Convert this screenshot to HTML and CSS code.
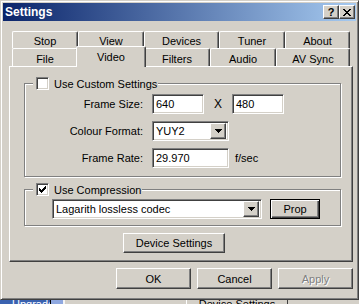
FILE: index.html
```html
<!DOCTYPE html>
<html lang="en">
<head>
  <meta charset="UTF-8">
  <meta name="viewport" content="width=device-width, initial-scale=1.0">
  <title>Settings</title>
  <link rel="stylesheet" href="styles.css">
</head>
<body>
  <div class="window">
    <div class="titlebar">
      <span class="title">Settings</span>
      <div class="title-buttons">
        <span class="tbtn help">?</span>
        <span class="tbtn close">
          <svg width="8" height="7" viewBox="0 0 8 7" shape-rendering="crispEdges"><path d="M0 0h2v1h-2zM6 0h2v1h-2zM1 1h2v1h-2zM5 1h2v1h-2zM2 2h4v1h-4zM3 3h2v1h-2zM2 4h4v1h-4zM1 5h2v1h-2zM5 5h2v1h-2zM0 6h2v1h-2zM6 6h2v1h-2z"/></svg>
        </span>
      </div>
    </div>

    <div class="content">
      <div class="tabs">
        <div class="tab-row back">
          <div class="tab w66">Stop</div>
          <div class="tab w66">View</div>
          <div class="tab w75">Devices</div>
          <div class="tab w66">Tuner</div>
          <div class="tab w65">About</div>
        </div>
        <div class="tab-row front">
          <div class="tab w66">File</div>
          <div class="tab w66 active">Video</div>
          <div class="tab w66">Filters</div>
          <div class="tab w66">Audio</div>
          <div class="tab w74">AV Sync</div>
        </div>
      </div>

      <div class="panel">
        <fieldset class="group custom">
          <legend><span class="check"></span><span class="legend-text">Use Custom Settings</span></legend>
          <div class="form">
            <label>Frame Size:</label>
            <div class="ctl">
              <span class="edit w52">640</span>
              <span class="times">X</span>
              <span class="edit w52">480</span>
            </div>

            <label>Colour Format:</label>
            <div class="ctl">
              <div class="combo w77">
                <span class="combo-text">YUY2</span>
                <span class="drop"><svg width="7" height="4" viewBox="0 0 7 4" shape-rendering="crispEdges"><path d="M0 0h7v1h-7zM1 1h5v1h-5zM2 2h3v1h-3zM3 3h1v1h-1z"/></svg></span>
              </div>
            </div>

            <label>Frame Rate:</label>
            <div class="ctl">
              <span class="edit w77">29.970</span>
              <span class="unit">f/sec</span>
            </div>
          </div>
        </fieldset>

        <fieldset class="group compression">
          <legend><span class="check on"><svg width="7" height="7" viewBox="0 0 7 7" shape-rendering="crispEdges"><path d="M6 0h1v1h-1zM5 1h2v1h-2zM0 2h1v1h-1zM4 2h3v1h-3zM0 3h2v1h-2zM3 3h3v1h-3zM0 4h5v1h-5zM1 5h3v1h-3zM2 6h1v1h-1z"/></svg></span><span class="legend-text">Use Compression</span></legend>
          <div class="codec-row">
            <div class="combo codec">
              <span class="combo-text">Lagarith lossless codec</span>
              <span class="drop"><svg width="7" height="4" viewBox="0 0 7 4" shape-rendering="crispEdges"><path d="M0 0h7v1h-7zM1 1h5v1h-5zM2 2h3v1h-3zM3 3h1v1h-1z"/></svg></span>
            </div>
            <span class="btn default prop">Prop</span>
          </div>
        </fieldset>

        <span class="btn device">Device Settings</span>
      </div>

      <div class="actions">
        <span class="btn action">OK</span>
        <span class="btn action">Cancel</span>
        <span class="btn action disabled">Apply</span>
      </div>
    </div>
  </div>

  <div class="under">
    <div class="task"><span>Upgrade</span></div>
    <div class="task-edge"></div>
    <div class="task-light"></div>
    <div class="task-white"></div>
    <div class="behind"><span>Device Settings</span></div>
  </div>
</body>
</html>
```

FILE: styles.css
```css
* {
  box-sizing: border-box;
}
body {
  margin: 0;
  background-color: #d4d0c8;
  font-family: "Liberation Sans", Arial, sans-serif;
  font-size: 11px;
  color: #000;
}

/* window frame */
.window {
  width: 359px;
  height: 300px;
  padding: 2px;
  background-color: #d4d0c8;
  border: 1px solid;
  border-color: #d4d0c8 #404040 #404040 #d4d0c8;
  box-shadow: inset 1px 1px #fff, inset -1px -1px #808080;
  display: flex;
  flex-direction: column;
}
.titlebar {
  height: 18px;
  display: flex;
  align-items: center;
  justify-content: space-between;
  padding: 0 1px 0 2px;
  background: linear-gradient(to right, #0a246a, #a6caf0);
}
.title {
  color: #fff;
  font-weight: bold;
  font-size: 12px;
}
.title-buttons {
  display: flex;
}
.tbtn {
  width: 16px;
  height: 14px;
  display: flex;
  align-items: center;
  justify-content: center;
  background-color: #d4d0c8;
  border: 1px solid;
  border-color: #fff #404040 #404040 #fff;
  box-shadow: inset -1px -1px #808080;
}
.help {
  font-weight: bold;
  font-size: 11px;
  line-height: 1;
}

.content {
  padding: 0 3px 0 6px;
}

/* tabs */
.tabs {
  margin: 10px 0 0 3px;
  width: 338px;
}
.tab-row {
  display: flex;
}
.tab {
  height: 17px;
  padding-top: 3px;
  text-align: center;
  background-color: #d4d0c8;
  border: 1px solid #fff;
  border-right-color: #404040;
  border-bottom: 0;
  border-radius: 2px 2px 0 0;
  box-shadow: inset -1px 0 #808080;
}
.front .tab {
  height: 18px;
  padding-top: 4px;
}
.front .tab.active {
  position: relative;
  z-index: 1;
  width: 70px;
  height: 21px;
  margin: -2px -2px -1px;
  padding-top: 4px;
}
.w65 { width: 65px; }
.w66 { width: 66px; }
.w74 { width: 74px; }
.w75 { width: 75px; }

.panel {
  height: 196px;
  border: 1px solid;
  border-color: #fff #404040 #404040 #fff;
  box-shadow: inset -1px -1px #808080;
}

/* group boxes */
.group {
  margin: 10px 11px 0 14px;
  padding: 4px 0 8px;
  min-width: 0;
  border: 1px solid #808080;
  box-shadow: 1px 1px #fff, inset 1px 1px #fff;
}
.group legend {
  display: flex;
  align-items: center;
  height: 13px;
  margin-left: 8px;
  padding: 0 1px 0 3px;
  background-color: #d4d0c8;
}
.legend-text {
  margin-left: 5px;
}
.compression {
  margin-top: 6px;
  padding: 3px 0 6px;
}
.check {
  width: 13px;
  height: 13px;
  display: flex;
  align-items: center;
  justify-content: center;
  background-color: #fff;
  border: 1px solid;
  border-color: #808080 #fff #fff #808080;
  box-shadow: inset 1px 1px #404040, inset -1px -1px #d4d0c8;
}

.form {
  display: grid;
  grid-template-columns: 118px auto;
  column-gap: 9px;
  row-gap: 7px;
  align-items: center;
}
.form label {
  text-align: right;
}
.ctl {
  display: flex;
  align-items: center;
}
.edit {
  height: 20px;
  padding: 0 3px;
  line-height: 18px;
  background-color: #fff;
  border: 1px solid;
  border-color: #808080 #fff #fff #808080;
  box-shadow: inset 1px 1px #404040, inset -1px -1px #d4d0c8;
}
.w52 { width: 52px; }
.w77 { width: 77px; }
.times {
  width: 28px;
  text-align: center;
  font-size: 12px;
}
.unit {
  margin-left: 6px;
}

.combo {
  height: 20px;
  display: flex;
  align-items: center;
  padding: 2px;
  background-color: #fff;
  border: 1px solid;
  border-color: #808080 #fff #fff #808080;
  box-shadow: inset 1px 1px #404040, inset -1px -1px #d4d0c8;
}
.combo-text {
  flex: 1;
  padding-left: 1px;
}
.drop {
  width: 16px;
  height: 16px;
  display: flex;
  align-items: center;
  justify-content: center;
  background-color: #d4d0c8;
  border: 1px solid;
  border-color: #fff #404040 #404040 #fff;
  box-shadow: inset -1px -1px #808080;
}

.codec-row {
  display: flex;
  align-items: center;
  margin-left: 27px;
}
.codec {
  width: 210px;
}

/* push buttons */
.btn {
  display: flex;
  align-items: center;
  justify-content: center;
  height: 20px;
  background-color: #d4d0c8;
  border: 1px solid;
  border-color: #fff #404040 #404040 #fff;
  box-shadow: inset -1px -1px #808080;
}
.btn.default {
  border-color: #000;
  box-shadow: inset 1px 1px #fff, inset -1px -1px #404040, inset -2px -2px #808080;
}
.prop {
  width: 50px;
  margin-left: 8px;
}
.device {
  width: 102px;
  margin: 7px 0 0 113px;
}
.actions {
  display: flex;
  justify-content: flex-end;
  gap: 6px;
  margin-top: 6px;
}
.action {
  width: 75px;
  height: 21px;
}
.disabled {
  color: #808080;
  text-shadow: 1px 1px #fff;
}

/* bit of whatever sits below the dialog */
.under {
  height: 4px;
  display: flex;
  overflow: hidden;
  background-color: #d4d0c8;
}
.under span {
  display: block;
  margin-top: -2px;
  line-height: 12px;
}
.task {
  width: 50px;
  padding-left: 12px;
  color: #fff;
  background-color: #3a62b0;
}
.task-edge {
  width: 1px;
  background-color: #000;
}
.task-light {
  width: 12px;
  background-color: #8fa8e0;
}
.task-white {
  width: 2px;
  background-color: #f4f4f4;
}
.behind {
  width: 102px;
  margin-left: 121px;
  text-align: center;
  border-left: 1px solid #fff;
  border-right: 1px solid #404040;
}
```
